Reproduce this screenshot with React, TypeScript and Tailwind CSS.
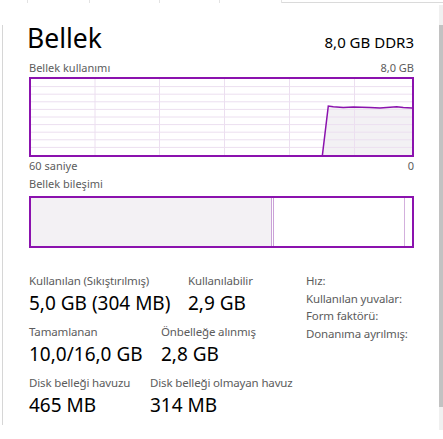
// Task Manager memory panel (Bellek)

const font = { fontFamily: '"Noto Sans", "Open Sans", sans-serif' };

const vLines = [64, 128.5, 193.5, 258.5, 323.5];
const hLines = [1, 2, 3, 4, 5, 6, 7, 8, 9].map((i) => i * 7.6);
const usage: [number, number][] = [
  [291.3, 77],
  [297.3, 27],
  [302.3, 27.7],
  [312.3, 28.4],
  [322.3, 28],
  [339, 28.4],
  [349, 29],
  [365.7, 27.7],
  [372.3, 28.4],
  [382, 29],
];

function UsageChart() {
  const line = usage.map(([x, y]) => `${x},${y}`).join(' ');
  const area = `${line} 382,77 291.3,77`;
  return (
    <svg width="381" height="76" viewBox="0 0 381 76" className="block">
      <polygon points={area} fill="#f3f1f4" />
      {vLines.map((x) => (
        <line key={'v' + x} x1={x} y1={0} x2={x} y2={76} stroke="#ecdff0" strokeWidth="1" />
      ))}
      {hLines.map((y) => (
        <line key={'h' + y} x1={0} y1={y} x2={381} y2={y} stroke="#ecdff0" strokeWidth="1" />
      ))}
      <polyline points={line} fill="none" stroke="#8b12ae" strokeWidth="1.5" />
    </svg>
  );
}

function Stat({ label, value, width }: { label: string; value: string; width?: string }) {
  return (
    <div className={width}>
      <div className="text-[11.5px] leading-[14px] tracking-[-0.15px] text-[#5c5c5c] whitespace-nowrap">{label}</div>
      <div className="mt-[3px] text-[19px] leading-[24px] text-black whitespace-nowrap">{value}</div>
    </div>
  );
}

export default function App() {
  return (
    <div className="relative w-[443px] h-[439px] bg-white overflow-hidden" style={font}>
      {/* header strip */}
      <div className="flex h-[3px]">
        <div className="w-[28px] border-r border-[#e3e3e3]" />
        <div className="w-[62px] border-r border-[#e3e3e3]" />
        <div className="w-[70px] border-r border-[#e3e3e3]" />
        <div className="w-[60px] border-r border-[#e3e3e3]" />
        <div className="w-[62px] border-r border-[#e3e3e3]" />
        <div className="flex-1 border-b border-[#dadada]" />
      </div>

      <div className="ml-[2px] mt-[22px] h-[400px] w-[436px] border-l border-[#d6d6d6] pl-[26px]">
        <div className="w-[385px]">
          <div className="flex items-baseline justify-between">
            <div className="-ml-[2px] text-[26.5px] leading-[26px] text-black">Bellek</div>
            <div className="text-[15px] leading-[18px] text-black">8,0 GB DDR3</div>
          </div>

          <div className="mt-[10px] flex justify-between text-[11px] leading-[14px] text-[#5c5c5c]">
            <span>Bellek kullanımı</span>
            <span>8,0 GB</span>
          </div>
          <div className="mt-[2px] h-[80px] border-2 border-[#8b12ae]">
            <UsageChart />
          </div>
          <div className="mt-[2px] flex justify-between text-[11px] leading-[14px] text-[#5c5c5c]">
            <span>60 saniye</span>
            <span>0</span>
          </div>

          <div className="mt-[4px] text-[11px] leading-[14px] text-[#5c5c5c]">Bellek bileşimi</div>
          <div className="mt-[5px] flex h-[52px] border-2 border-[#8b12ae]">
            <div className="w-[240px] bg-[#f3f1f4]" />
            <div className="w-[1px] bg-[#caa2d7]" />
            <div className="w-[1px]" />
            <div className="w-[1px] bg-[#caa2d7]" />
            <div className="w-[130px]" />
            <div className="w-[1px] bg-[#d3b0dd]" />
            <div className="flex-1" />
          </div>

          <div className="mt-[25.5px] flex">
            <div className="w-[277px]">
              <div className="flex">
                <Stat label="Kullanılan (Sıkıştırılmış)" value="5,0 GB (304 MB)" width="w-[159px]" />
                <Stat label="Kullanılabilir" value="2,9 GB" />
              </div>
              <div className="mt-[10px] flex">
                <Stat label="Tamamlanan" value="10,0/16,0 GB" width="w-[132px]" />
                <Stat label="Önbelleğe alınmış" value="2,8 GB" />
              </div>
              <div className="mt-[10px] flex">
                <Stat label="Disk belleği havuzu" value="465 MB" width="w-[121px]" />
                <Stat label="Disk belleği olmayan havuz" value="314 MB" />
              </div>
            </div>
            <div className="-mt-[1.5px] text-[11.5px] leading-[17.5px] tracking-[-0.15px] text-[#5c5c5c] whitespace-nowrap">
              <div>Hız:</div>
              <div>Kullanılan yuvalar:</div>
              <div>Form faktörü:</div>
              <div>Donanıma ayrılmış:</div>
            </div>
          </div>
        </div>
      </div>

      {/* scrollbar */}
      <div className="absolute right-0 top-[5px] h-[425px] w-[4px] bg-[#f0f0f0]">
        <div className="mt-[20px] h-[382px] w-full bg-[#c2c2c2]" />
      </div>
    </div>
  );
}
